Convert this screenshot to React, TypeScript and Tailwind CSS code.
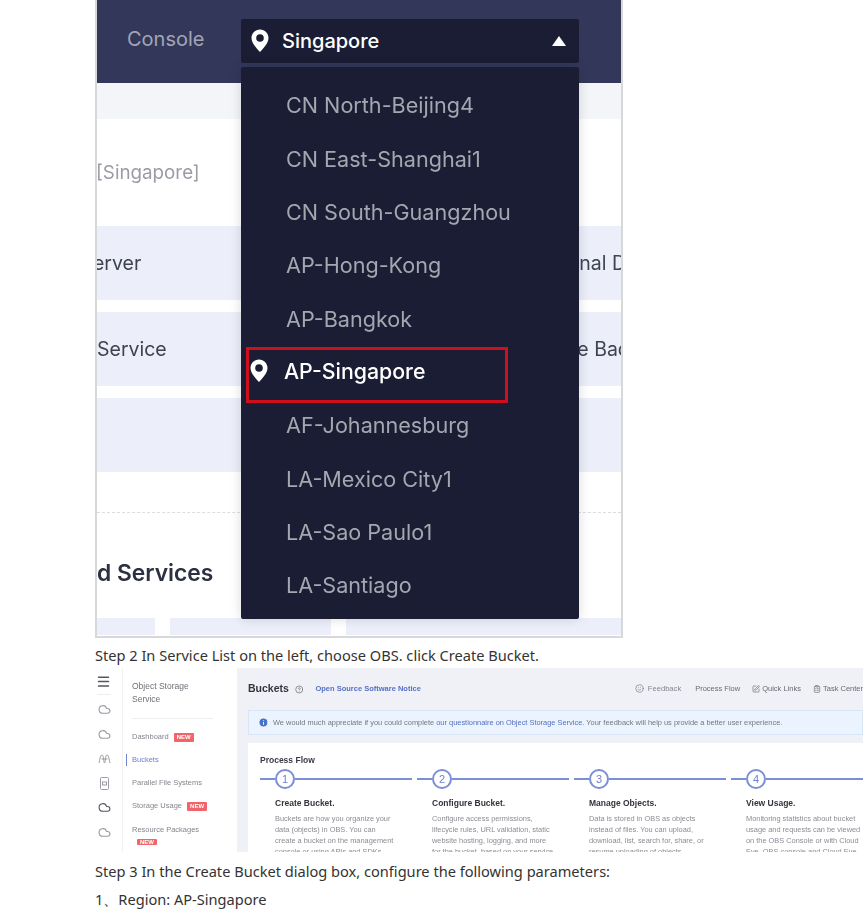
import React from "react";
import { Cloud, HelpCircle, Info, Menu, Smile, SquarePen, ClipboardList } from "lucide-react";

const regions = [
  "CN North-Beijing4",
  "CN East-Shanghai1",
  "CN South-Guangzhou",
  "AP-Hong-Kong",
  "AP-Bangkok",
  "AP-Singapore",
  "AF-Johannesburg",
  "LA-Mexico City1",
  "LA-Sao Paulo1",
  "LA-Santiago",
];

const steps = [
  {
    n: "1",
    title: "Create Bucket.",
    lines: ["Buckets are how you organize your", "data (objects) in OBS. You can", "create a bucket on the management", "console or using APIs and SDKs."],
  },
  {
    n: "2",
    title: "Configure Bucket.",
    lines: ["Configure access permissions,", "lifecycle rules, URL validation, static", "website hosting, logging, and more", "for the bucket, based on your service"],
  },
  {
    n: "3",
    title: "Manage Objects.",
    lines: ["Data is stored in OBS as objects", "instead of files. You can upload,", "download, list, search for, share, or", "resume uploading of objects."],
  },
  {
    n: "4",
    title: "View Usage.",
    lines: ["Monitoring statistics about bucket", "usage and requests can be viewed", "on the OBS Console or with Cloud", "Eye. OBS console and Cloud Eye"],
  },
];

const Pin = () => (
  <svg width="18" height="24" viewBox="0 0 18 24" className="shrink-0">
    <path d="M9 0.5C4.2 0.5 0.5 4.2 0.5 9c0 5.6 5.600 10.600 8.500 14 2.900-3.400 8.500-8.400 8.500-14C17.500 4.200 13.800 0.500 9 0.500z" fill="#ffffff" />
    <circle cx="9" cy="9" r="3.800" fill="#1a1d33" />
  </svg>
);

const New = () => (
  <span className="bg-[#f0656a] text-white text-[6px] font-bold leading-[9px] px-[3px] rounded-[1px]">NEW</span>
);

const RegionScreenshot = () => (
  <div className="relative w-[528px] h-[638px] border-2 border-t-0 border-[#d8d8d8] bg-white overflow-hidden font-['Inter',sans-serif]">
    <div className="blur-[0.3px]">
      <div className="h-[83px] bg-[#33385a] flex pl-[30px] pt-[19px]">
        <span className="w-[114px] text-[20px] leading-[40px] text-[#a3a5b4]">Console</span>
        <div className="w-[338px] h-[44px] rounded-[2px] bg-[#1a1d33] flex items-center pl-[10px] pr-[13px]">
          <Pin />
          <span className="ml-[13px] text-[20px] font-medium text-white">Singapore</span>
          <svg width="14" height="10" viewBox="0 0 14 10" className="ml-auto">
            <path d="M7 0L14 10H0z" fill="#ffffff" />
          </svg>
        </div>
      </div>
      <div className="h-[36px] bg-[#f4f5f9]" />
      <div className="h-[107px] flex items-center pt-[2px] text-[18.800px] text-[#9a9ca6]">
        <span className="-ml-[1px]">[Singapore]</span>
      </div>
      <div className="h-[74px] bg-[#eceff9] flex items-center justify-between pt-[2px] text-[19.500px] text-[#3f4250]">
        <span className="-ml-[4px]">erver</span>
        <span className="-mr-[5px]">nal D</span>
      </div>
      <div className="h-[12px]" />
      <div className="h-[74px] bg-[#eceff9] flex items-center justify-between pt-[2px] text-[19.500px] text-[#3f4250]">
        <span>Service</span>
        <span className="-mr-[8px]">e Bac</span>
      </div>
      <div className="h-[12px]" />
      <div className="h-[74px] bg-[#eceff9]" />
      <div className="h-[41px] border-b border-dashed border-[#dcdde2]" />
      <div className="h-[105px] flex items-center text-[22.800px] font-semibold text-[#2d3040]">
        <span className="mt-[15px]">d Services</span>
      </div>
      <div className="flex h-[17px]">
        <div className="w-[58px] bg-[#eceff9]" />
        <div className="w-[161px] ml-[15px] bg-[#eceff9]" />
        <div className="flex-1 ml-[15px] bg-[#eceff9]" />
      </div>
    </div>

    {/* region dropdown, sits over the page */}
    <div className="absolute left-[144px] top-[67px] w-[338px] h-[552px] pt-[12px] rounded-[2px] bg-[#1a1d33] shadow-[0_0_12px_rgba(0,0,0,0.15)] blur-[0.3px]">
      {regions.map((r) =>
        r === "AP-Singapore" ? (
          <div key={r} className="w-[262px] h-[56px] mt-[2px] -mb-[4.700px] ml-[5px] border-[3px] border-[#cf0f1b] flex items-start pl-[1px]">
            <span className="mt-[9px] flex"><Pin /></span>
            <span className="ml-[16px] mt-[7px] text-[21.300px] leading-[28px] font-medium text-white">{r}</span>
          </div>
        ) : (
          <div key={r} className="h-[53.300px] flex items-center pl-[45px] text-[21.600px] text-[#a5a6b0]">
            {r}
          </div>
        ),
      )}
    </div>
  </div>
);

const Step = ({ n, title, lines }: { n: string; title: string; lines: string[] }) => (
  <div className="w-[152px] shrink-0">
    <div className="h-[20px] flex items-center">
      <div className="w-[15px] h-[2px] bg-[#7b8fd6]" />
      <div className="w-[20px] h-[20px] rounded-full border-2 border-[#7b8fd6] flex items-center justify-center text-[11px] text-[#6f82cc] bg-white">
        {n}
      </div>
      <div className="flex-1 h-[2px] bg-[#7b8fd6]" />
    </div>
    <div className="pl-[15px] mt-[8px]">
      <div className="text-[8.500px] leading-[12px] font-bold text-[#33343c]">{title}</div>
      <div className="mt-[4px] text-[7.400px] leading-[11px] text-[#8b8c94] whitespace-nowrap">
        {lines.map((l) => (
          <div key={l}>{l}</div>
        ))}
      </div>
    </div>
  </div>
);

const ObsScreenshot = () => (
  <div className="w-[768px] h-[184px] overflow-hidden flex bg-white font-['Liberation_Sans',sans-serif] blur-[0.45px]">
    {/* icon rail */}
    <div className="w-[27px] shrink-0 flex flex-col items-start pl-[1px] text-[#9a9ba3]">
      <Menu size={15} strokeWidth={2.400} className="text-[#55565e] mt-[6px]" />
      <div className="w-[14px] h-px bg-[#eeeef1] mt-[5px] ml-[1px]" />
      <div className="flex flex-col gap-[11.500px] mt-[8px] ml-[2px]">
        <Cloud size={13} />
        <Cloud size={13} />
        <svg width="13" height="13" viewBox="0 0 13 13" fill="none" stroke="currentColor" strokeWidth="1">
          <path d="M1 11c1-3 1-8 3-8s1.500 8 2.500 8S7 3 9 3s2 5 3 8M3.500 7h6" />
        </svg>
        <svg width="13" height="13" viewBox="0 0 13 13" fill="none" stroke="currentColor" strokeWidth="1">
          <rect x="2.500" y="0.500" width="8" height="12" rx="1" />
          <rect x="4.500" y="5" width="4" height="3" />
        </svg>
        <Cloud size={13} className="text-[#55565e]" />
        <Cloud size={13} />
      </div>
    </div>

    {/* service sidebar */}
    <div className="w-[115px] shrink-0 pl-[9px] border-l border-[#f2f2f4] text-[7.500px] text-[#85868e]">
      <div className="mt-[12px] text-[8.500px] leading-[12.500px] text-[#6f7078]">
        Object Storage
        <br />
        Service
      </div>
      <div className="w-[81px] h-px bg-[#eeeef1] mt-[13px]" />
      <div className="flex items-center gap-[5px] h-[12px] mt-[12px]">
        Dashboard <New />
      </div>
      <div className="flex items-center h-[12px] mt-[11px] -ml-[6px] text-[#6f82cc]">
        <div className="w-px h-[12px] bg-[#6f82cc] mr-[5px]" />
        Buckets
      </div>
      <div className="h-[12px] leading-[12px] mt-[11px]">Parallel File Systems</div>
      <div className="flex items-center gap-[5px] h-[12px] mt-[11px]">
        Storage Usage <New />
      </div>
      <div className="h-[12px] leading-[12px] mt-[12px]">Resource Packages</div>
      <div className="pl-[5px] leading-[9px] mt-[1px]">
        <New />
      </div>
    </div>

    {/* main area */}
    <div className="flex-1 min-w-0 bg-[#f0f1f6] pl-[11px]">
      <div className="h-[42px] flex items-center whitespace-nowrap">
        <span className="text-[10.500px] font-bold text-[#33343c]">Buckets</span>
        <HelpCircle size={11} className="ml-[6px] text-[#6a6b73]" />
        <span className="ml-[12px] text-[7.500px] font-bold text-[#5570c4]">Open Source Software Notice</span>
        <div className="ml-[214px] flex items-center gap-[3px] text-[7.600px] text-[#85868e]">
          <Smile size={9} />
          <span className="ml-[1px]">Feedback</span>
        </div>
        <span className="ml-[14px] text-[7.500px] text-[#6a6b73]">Process Flow</span>
        <div className="ml-[12px] flex items-center gap-[2px] text-[7.500px] text-[#6a6b73]">
          <SquarePen size={8} />
          Quick Links
        </div>
        <div className="ml-[12px] flex items-center gap-[2px] text-[7.500px] text-[#6a6b73]">
          <ClipboardList size={8} />
          Task Center
        </div>
      </div>
      <div className="h-[25px] bg-[#eaf3fe] border border-[#d9e6f8] flex items-center pl-[9px] text-[7.430px] text-[#77787f] whitespace-nowrap">
        <Info size={11} className="text-white fill-[#4a74c9] mr-[4px] shrink-0" />
        We would much appreciate if you could complete&nbsp;
        <span className="text-[#5570c4]">our questionnaire on Object Storage Service</span>. Your feedback will help us provide a better user experience.
      </div>
      <div className="mt-[8px] h-[120px] bg-white pl-[12px] pt-[11px]">
        <div className="text-[8.500px] leading-[12px] font-bold text-[#3a3b43]">Process Flow</div>
        <div className="flex gap-[5px] mt-[3px]">
          {steps.map((s) => (
            <Step key={s.n} {...s} />
          ))}
        </div>
      </div>
    </div>
  </div>
);

const App = () => {
  return (
    <div className="w-[863px] h-[911px] overflow-hidden bg-white pl-[95px] font-['Noto_Sans',sans-serif] text-[14.600px] text-[#333333]">
      <RegionScreenshot />
      <p className="h-[30px] leading-[34px]">Step 2 In Service List on the left, choose OBS. click Create Bucket.</p>
      <ObsScreenshot />
      <p className="h-[33px] leading-[38px]">Step 3 In the Create Bucket dialog box, configure the following parameters:</p>
      <p className="leading-[28px]">1、Region: AP-Singapore</p>
    </div>
  );
};

export default App;
